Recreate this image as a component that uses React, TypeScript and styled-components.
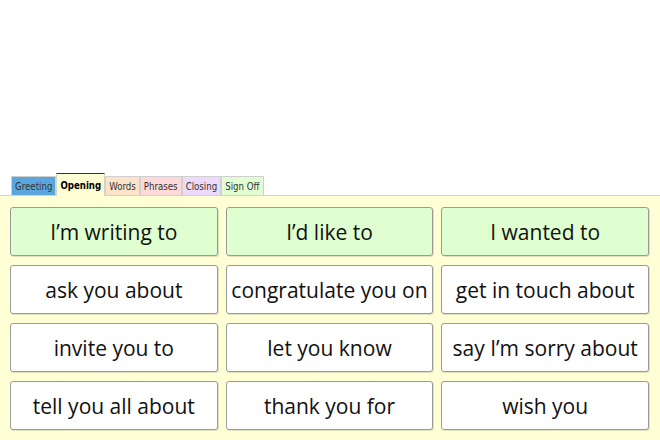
import styled, { createGlobalStyle } from "styled-components";

const GlobalStyle = createGlobalStyle`
  html, body {
    margin: 0;
    padding: 0;
    background: #ffffff;
  }
`;

const Page = styled.div`
  width: 660px;
  height: 440px;
  display: flex;
  flex-direction: column;
  justify-content: flex-end;
  overflow: hidden;
`;

const TabBar = styled.div`
  display: flex;
  align-items: flex-end;
  padding-left: 11px;
  height: 23px;
`;

const Tab = styled.div<{ bg: string; active?: boolean }>`
  box-sizing: border-box;
  height: ${(p) => (p.active ? "23px" : "19px")};
  padding: 0 3px;
  display: flex;
  align-items: center;
  justify-content: center;
  background: ${(p) => p.bg};
  border: 1px solid ${(p) => (p.active ? "#d6d6c0" : "#d0d0d0")};
  border-top: 1px solid ${(p) => (p.active ? "#333" : "#d0d0d0")};
  border-bottom: none;
  font-family: "DejaVu Sans Condensed", "DejaVu Sans", Tahoma, sans-serif;
  font-stretch: condensed;
  font-size: 9.6px;
  font-weight: ${(p) => (p.active ? "bold" : "normal")};
  color: ${(p) => (p.active ? "#000" : "#333")};
  margin-bottom: ${(p) => (p.active ? "-1px" : "0")};
  position: relative;
  z-index: ${(p) => (p.active ? 2 : 1)};
`;

const Panel = styled.div`
  box-sizing: border-box;
  background: #ffffd6;
  border-top: 1px solid #d4d4c0;
  padding: 11px 11px 10px 10px;
  display: grid;
  grid-template-columns: repeat(3, 1fr);
  grid-auto-rows: 49px;
  column-gap: 8px;
  row-gap: 9px;
`;

const Cell = styled.div<{ starter?: boolean }>`
  box-sizing: border-box;
  display: flex;
  align-items: center;
  justify-content: center;
  background: ${(p) => (p.starter ? "#dfffd0" : "#ffffff")};
  border: 1px solid #9a9a9a;
  border-radius: 3px;
  box-shadow: 1px 1px 0 rgba(0, 0, 0, 0.12);
  font-family: "Open Sans", "DejaVu Sans", sans-serif;
  font-size: 21px;
  color: #111;
  white-space: nowrap;
`;

const tabs = [
  { label: "Greeting", bg: "#5ba7dd" },
  { label: "Opening", bg: "#ffffd6", active: true },
  { label: "Words", bg: "#fde3cc" },
  { label: "Phrases", bg: "#fdd9d9" },
  { label: "Closing", bg: "#eddafa" },
  { label: "Sign Off", bg: "#e2fdd4" },
];

const starters = ["I’m writing to", "I’d like to", "I wanted to"];
const phrases = [
  "ask you about",
  "congratulate you on",
  "get in touch about",
  "invite you to",
  "let you know",
  "say I’m sorry about",
  "tell you all about",
  "thank you for",
  "wish you",
];

export default function App() {
  return (
    <>
      <GlobalStyle />
      <Page>
        <TabBar>
          {tabs.map((t) => (
            <Tab key={t.label} bg={t.bg} active={t.active}>
              {t.label}
            </Tab>
          ))}
        </TabBar>
        <Panel>
          {starters.map((s) => (
            <Cell key={s} starter>
              {s}
            </Cell>
          ))}
          {phrases.map((s) => (
            <Cell key={s}>{s}</Cell>
          ))}
        </Panel>
      </Page>
    </>
  );
}
